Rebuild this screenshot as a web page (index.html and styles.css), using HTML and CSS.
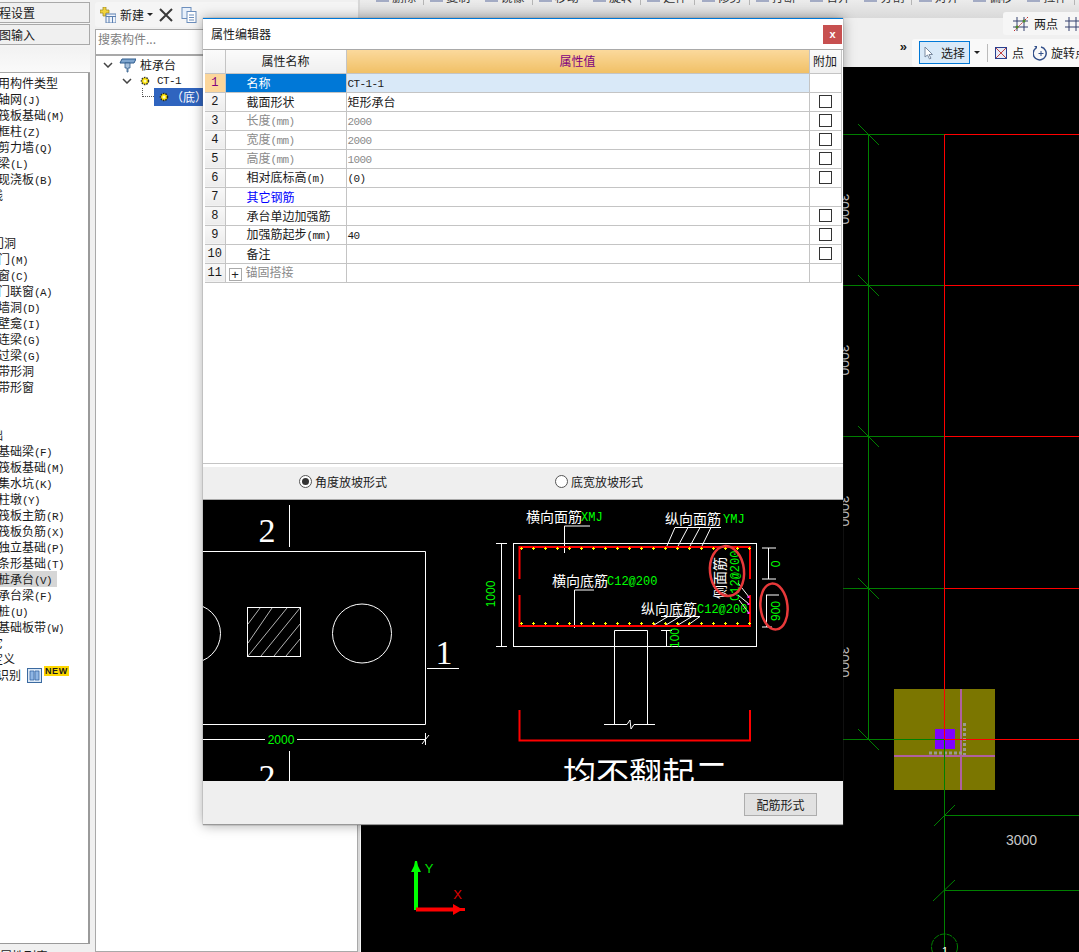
FILE: index.html
```html
<!DOCTYPE html>
<html lang="zh-CN">
<head>
<meta charset="utf-8">
<title>属性编辑器</title>
<link rel="stylesheet" href="styles.css">
</head>
<body>
<div class="app">
  <aside class="nav">
    <div class="tab">程设置</div>
    <div class="tab">图输入</div>
    <div class="nav-head"></div>
    <div class="nav-list">
      <div class="item c14">常用构件类型</div>
      <div class="item">轴网<span class="m">(J)</span></div>
      <div class="item">筏板基础<span class="m">(M)</span></div>
      <div class="item">框柱<span class="m">(Z)</span></div>
      <div class="item">剪力墙<span class="m">(Q)</span></div>
      <div class="item">梁<span class="m">(L)</span></div>
      <div class="item">现浇板<span class="m">(B)</span></div>
      <div class="item c9">线</div>
      <div class="item"></div>
      <div class="item"></div>
      <div class="item c8">门洞</div>
      <div class="item">门<span class="m">(M)</span></div>
      <div class="item">窗<span class="m">(C)</span></div>
      <div class="item">门联窗<span class="m">(A)</span></div>
      <div class="item">墙洞<span class="m">(D)</span></div>
      <div class="item">壁龛<span class="m">(I)</span></div>
      <div class="item">连梁<span class="m">(G)</span></div>
      <div class="item">过梁<span class="m">(G)</span></div>
      <div class="item">带形洞</div>
      <div class="item">带形窗</div>
      <div class="item"></div>
      <div class="item"></div>
      <div class="item c21">基础</div>
      <div class="item">基础梁<span class="m">(F)</span></div>
      <div class="item">筏板基础<span class="m">(M)</span></div>
      <div class="item">集水坑<span class="m">(K)</span></div>
      <div class="item">柱墩<span class="m">(Y)</span></div>
      <div class="item">筏板主筋<span class="m">(R)</span></div>
      <div class="item">筏板负筋<span class="m">(X)</span></div>
      <div class="item">独立基础<span class="m">(P)</span></div>
      <div class="item">条形基础<span class="m">(T)</span></div>
      <div class="item on">桩承台<span class="m">(V)</span></div>
      <div class="item">承台梁<span class="m">(F)</span></div>
      <div class="item">桩<span class="m">(U)</span></div>
      <div class="item">基础板带<span class="m">(W)</span></div>
      <div class="item c9">它</div>
      <div class="item c9">定义</div>
      <div class="item recog">
        <span>识别</span>
        <svg class="book" viewBox="0 0 15 15"><rect x=".5" y=".5" width="14" height="14" fill="#dbe8f6" stroke="#3b6aa0"/><path d="M3 3h4v9H3zM8 3h4v9H8z" fill="#8fb6e4" stroke="#2f5f9f" stroke-width=".7"/></svg>
        <span class="new">NEW</span>
      </div>
    </div>
    <div class="nav-foot">属性列表</div>
  </aside>

  <section class="tree">
    <div class="tree-tools">
      <svg class="i16" viewBox="0 0 16 16"><path d="M3 0h3v3h3v3H6v3H3V6H0V3h3z" fill="#f2d33c" stroke="#9a8420" stroke-width=".7"/><rect x="6" y="7" width="10" height="9" fill="#eef3fa" stroke="#5b7fb0"/><path d="M6 9.500h10M9 9.500V16M12.500 9.500V16" stroke="#5b7fb0" fill="none"/></svg>
      <span class="tool-label">新建</span><span class="caret"></span>
      <svg class="i14 del" viewBox="0 0 14 14"><path d="M1 1l12 12M13 1L1 13" stroke="#3a3a3a" stroke-width="2" fill="none"/></svg>
      <svg class="i16" viewBox="0 0 16 16"><rect x="1" y="0.500" width="9" height="11" fill="#e8f0fa" stroke="#6d8fbd"/><rect x="6" y="4.500" width="9" height="11" fill="#fff" stroke="#6d8fbd"/><path d="M8 8h5M8 10.500h5M8 13h5" stroke="#6d8fbd"/></svg>
    </div>
    <div class="search">搜索构件...</div>
    <div class="tree-box">
      <div class="node n1">
        <svg class="chev" viewBox="0 0 10 6"><path d="M1 1l4 4 4-4" fill="none" stroke="#444" stroke-width="1.500"/></svg>
        <svg class="funnel" viewBox="0 0 17 15"><path d="M3 1h14l-2 4H1z" fill="#7fa6cf" stroke="#2d5a8c"/><path d="M6 5h5v5H9v4H8v-4H6z" fill="#a9c2dc" stroke="#2d5a8c" stroke-width=".8"/></svg>
        <span>桩承台</span>
      </div>
      <div class="node n2">
        <svg class="chev" viewBox="0 0 10 6"><path d="M1 1l4 4 4-4" fill="none" stroke="#444" stroke-width="1.500"/></svg>
        <svg class="gear" viewBox="0 0 10 10"><circle cx="5" cy="5" r="3.500" fill="#ffe500" stroke="#333" stroke-dasharray="1.500 1" stroke-width="1.500"/><circle cx="5" cy="5" r="1.500" fill="#fff8b0"/></svg>
        <span class="m">CT-1</span>
      </div>
      <div class="node n3">
        <span class="elbow"></span>
        <div class="sel">
          <svg class="gear" viewBox="0 0 10 10"><circle cx="5" cy="5" r="3.500" fill="#ffe500" stroke="#222" stroke-dasharray="1.500 1" stroke-width="1.500"/><circle cx="5" cy="5" r="1.500" fill="#fff8b0"/></svg>
          <span class="sel-text">（底）CT-1-1</span>
        </div>
      </div>
    </div>
  </section>

  <main class="work">
    <div class="bar1">
      <span class="clip sep">删除</span><span class="clip">复制</span><span class="clip sep">镜像</span><span class="clip">移动</span><span class="clip sep">旋转</span><span class="clip sep">延伸</span><span class="clip sep">修剪</span><span class="clip">打断</span><span class="clip">合并</span><span class="clip sep">分割</span><span class="clip">对齐</span><span class="clip">偏移</span><span class="clip sep">拉伸</span>
    </div>
    <div class="bar2">
      <div class="pill">
        <svg class="i16" viewBox="0 0 16 16"><path d="M4 1v14M11 1v14M0 5h15M0 11h15" stroke="#35406f" fill="none"/><path d="M1 15L15 1" stroke="#c03030" stroke-dasharray="2 1"/><circle cx="4" cy="11" r="1.500" fill="#4c8a2c"/><circle cx="11" cy="5" r="1.500" fill="#4c8a2c"/></svg>
        <span class="bar-label">两点</span>
        <svg class="i16" viewBox="0 0 16 16"><path d="M4 1v14M11 1v14M0 5h15M0 11h15" stroke="#35406f" fill="none"/></svg>
      </div>
    </div>
    <div class="bar3">
      <div class="more">»</div>
      <div class="tools3">
        <div class="btn-sel">
          <svg class="i12" viewBox="0 0 12 14"><path d="M2 1v10l2.500-2 2 4 1.500-.8-2-3.700h3.500z" fill="#fff" stroke="#7a8aa0"/></svg>
          <span>选择</span>
        </div>
        <span class="caret"></span>
        <span class="vsep"></span>
        <svg class="i12" viewBox="0 0 12 12"><rect x=".5" y=".5" width="11" height="11" fill="#e6eaf5" stroke="#2a3f8f"/><path d="M1 1l10 10M11 1L1 11" stroke="#c04040"/></svg>
        <span class="bar-label">点</span>
        <svg class="i16" viewBox="0 0 16 16"><path d="M3 3a6.500 6.500 0 1 0 5-1" fill="none" stroke="#33508a" stroke-width="1.500"/><path d="M1 1l3 0 0 3z" fill="#33508a"/><path d="M8 6v5M5.500 8.500h5" stroke="#33508a"/></svg>
        <span class="bar-label">旋转点</span>
      </div>
    </div>
    <div class="canvas">
      <svg class="cad" viewBox="361 67 718 885">
        <g class="dg">
          <path d="M843 134.500H945M843 285.500H945M843 436.500H945M843 588.500H945M843 739.500H945"/>
          <path d="M868.500 134.500V739.500M944.500 739.500V952M944.500 815.500H1079M944.500 890.500H1079"/>
          <path d="M858 124L879 145M858 275L879 296M858 426L879 447M858 578L879 599M858 729L879 750M934 826L955 805M933 901L955 880"/>
          <circle cx="944.500" cy="947" r="13" stroke-dasharray="6 1"/>
        </g>
        <g class="rd">
          <path d="M944.500 134.500V739.500M944.500 134.500H1079M944.500 285.500H1079M944.500 436.500H1079M944.500 588.500H1079"/>
        </g>
        <rect class="olive" x="894" y="689" width="101" height="101"/>
        <rect class="pink" x="960" y="689" width="2" height="101"/>
        <rect class="pink" x="894" y="755" width="101" height="2"/>
        <path class="dots" d="M964.500 723V755M929 753H962"/>
        <rect class="violet" x="935" y="729" width="20" height="20"/>
        <g class="dg"><path d="M843 739.500H945M944.500 689V790"/></g>
        <g class="rd"><path d="M944.500 689V739.500M944.500 739.500H1079"/></g>
        <text class="t-gray" x="1021.500" y="845" text-anchor="middle">3000</text>
        <text class="t-gray" transform="translate(839 209) rotate(90)" text-anchor="middle">3000</text>
        <text class="t-gray" transform="translate(839 360) rotate(90)" text-anchor="middle">3000</text>
        <text class="t-gray" transform="translate(839 511) rotate(90)" text-anchor="middle">3000</text>
        <text class="t-gray" transform="translate(839 662) rotate(90)" text-anchor="middle">3000</text>
        <text class="t-one" x="945" y="955" text-anchor="middle">1</text>
        <path class="ax-g" d="M416 910V870"/><path class="fill-g" d="M415 861h2l1 5 3 6h-10l3-6z"/>
        <path class="ax-r" d="M416 909.500H453"/><path class="fill-r" d="M453 904l7 4h5v3h-5l-7 4z"/>
        <text class="t-axg" x="429" y="873" text-anchor="middle">Y</text>
        <text class="t-axr" x="457.500" y="899" text-anchor="middle">X</text>
      </svg>
    </div>
  </main>
</div>

<div class="dialog">
  <header class="dlg-title">
    <span>属性编辑器</span>
    <button class="close">x</button>
  </header>
  <div class="dlg-body">
    <table class="grid">
      <colgroup><col class="c-n"><col class="c-k"><col class="c-v"><col class="c-a"></colgroup>
      <thead>
        <tr><th class="num"></th><th>属性名称</th><th class="gold">属性值</th><th>附加</th></tr>
      </thead>
      <tbody>
        <tr class="active"><td class="num">1</td><td class="key">名称</td><td class="val"><span class="m">CT-1-1</span></td><td></td></tr>
        <tr><td class="num">2</td><td class="key">截面形状</td><td class="val">矩形承台</td><td class="chk"><i></i></td></tr>
        <tr class="dim"><td class="num">3</td><td class="key">长度<span class="m">(mm)</span></td><td class="val"><span class="m">2000</span></td><td class="chk"><i></i></td></tr>
        <tr class="dim"><td class="num">4</td><td class="key">宽度<span class="m">(mm)</span></td><td class="val"><span class="m">2000</span></td><td class="chk"><i></i></td></tr>
        <tr class="dim"><td class="num">5</td><td class="key">高度<span class="m">(mm)</span></td><td class="val"><span class="m">1000</span></td><td class="chk"><i></i></td></tr>
        <tr><td class="num">6</td><td class="key">相对底标高<span class="m">(m)</span></td><td class="val"><span class="m">(0)</span></td><td class="chk"><i></i></td></tr>
        <tr><td class="num">7</td><td class="key link">其它钢筋</td><td class="val"></td><td></td></tr>
        <tr><td class="num">8</td><td class="key">承台单边加强筋</td><td class="val"></td><td class="chk"><i></i></td></tr>
        <tr><td class="num">9</td><td class="key">加强筋起步<span class="m">(mm)</span></td><td class="val"><span class="m">40</span></td><td class="chk"><i></i></td></tr>
        <tr><td class="num">10</td><td class="key">备注</td><td class="val"></td><td class="chk"><i></i></td></tr>
        <tr class="dim"><td class="num">11</td><td class="key plus-cell"><b class="plus">+</b>锚固搭接</td><td class="val"></td><td></td></tr>
      </tbody>
    </table>
  </div>
  <div class="radios">
    <label class="radio"><span class="dot on"></span>角度放坡形式</label>
    <label class="radio"><span class="dot"></span>底宽放坡形式</label>
  </div>
  <div class="drawing">
    <svg class="cad" viewBox="203 500 640 281">
      <defs>
        <pattern id="plus" x="520" y="547" width="12" height="3" patternUnits="userSpaceOnUse">
          <path d="M0 1.500h3M1.500 0v3" stroke="#ffff00"/>
        </pattern>
      </defs>
      <g class="wl">
        <path d="M203 551.500H425.500V724.500H203M289.500 505V547M289.500 751V781M427 668.500H459M203 739.500H265M297 739.500H426M425.500 733V745M422 744L429 735"/>
        <circle cx="191" cy="633.500" r="29.500"/>
        <circle cx="362" cy="633.500" r="29.500"/>
        <rect x="247.500" y="607.500" width="53" height="49"/>
        <path class="thin" d="M248 624L260 608M248 643L272 608M248 656L287 608M261 656L300 608M274 656L300 624M286 656L300 639"/>
      </g>
      <text class="t-big" x="267" y="542" text-anchor="middle">2</text>
      <text class="t-big" x="444" y="664" text-anchor="middle">1</text>
      <text class="t-big" x="267" y="788" text-anchor="middle">2</text>
      <text class="t-g" x="281" y="744" text-anchor="middle">2000</text>

      <g class="wl">
        <rect x="513.500" y="543.500" width="243" height="103"/>
        <path d="M496 543.500H507M496 646.500H507M501.500 543.500V646.500"/>
        <path d="M564.500 526H590M564.500 526V553M675 527.500H721M675 527.500L666 548M688 527.500L677 548M700 527.500L689 548M711 527.500L701 548"/>
        <path d="M574.500 590H594M574.500 590V628M661 616.500H700M668 616.500L654 625M680 616.500L666 625M692 616.500L678 625M700 616.500L688 625"/>
        <path d="M738 583L749 597M738 595L749 604M739 600L749 613"/>
        <path d="M614.500 630.500H647.500M614.500 630.500V724.500M647.500 630.500V724.500M604 724.500H627L630 720L631 729L634 724.500H655"/>
        <path d="M666.500 630.500V646.500M661 630.500H672M661 646.500H672"/>
        <path d="M768.500 548V579M762 548H776M762 579H776M766.500 595V627M766 595H779M762 627H772"/>
      </g>
      <path class="rebar" d="M519.500 579V547H750V579M519.500 595V626H750V595M519.500 710V740.500H750V710"/>
      <rect x="520" y="547" width="231" height="3" fill="url(#plus)"/>
      <rect x="520" y="622" width="231" height="3" fill="url(#plus)"/>
      <path class="mdots" d="M748.500 597h.01M748.500 604h.01M748.500 613h.01"/>

      <text class="t-w" x="526" y="522">横向面筋</text><text class="t-gm" x="581" y="521">XMJ</text>
      <text class="t-w" x="665" y="524">纵向面筋</text><text class="t-gm" x="723" y="523">YMJ</text>
      <text class="t-w" x="552" y="586">横向底筋</text><text class="t-gs" x="607" y="585">C12@200</text>
      <text class="t-w" x="641" y="614">纵向底筋</text><text class="t-gs" x="697" y="613">C12@200</text>
      <text class="t-w" transform="translate(725 599) rotate(-90)">侧面筋</text>
      <text class="t-gs" transform="translate(739 601) rotate(-90)">C12@200</text>
      <text class="t-g" transform="translate(495 594) rotate(-90)" text-anchor="middle">1000</text>
      <text class="t-g" transform="translate(679 638) rotate(-90)" text-anchor="middle">100</text>
      <text class="t-g" transform="translate(780 564) rotate(-90)" text-anchor="middle">0</text>
      <text class="t-g" transform="translate(780 611) rotate(-90)" text-anchor="middle">900</text>
      <ellipse class="ring" cx="727" cy="571" rx="17" ry="25" transform="rotate(-6 727 571)"/>
      <ellipse class="ring" cx="774" cy="606.500" rx="13.500" ry="23" transform="rotate(-6 774 606.500)"/>
      <text class="t-title" x="563" y="786">均不翻起二</text>
    </svg>
  </div>
  <footer class="dlg-foot"><button class="form-btn">配筋形式</button></footer>
</div>
</body>
</html>
```
FILE: styles.css
```css
* { box-sizing: border-box; }
html, body { margin: 0; padding: 0; height: 100%; overflow: hidden; background: #fff; }
body { font: 12px/16px "Noto Sans CJK SC", "Liberation Sans", sans-serif; color: #1a1a1a; }
.m { font-family: "Liberation Mono", monospace; font-size: 11px; letter-spacing: -.6px; line-height: 12px; }
.app { display: flex; width: 1079px; height: 952px; }

.nav { width: 90px; flex: none; padding-top: 2px; background: #f4f4f4; display: flex; flex-direction: column; }
.tab { height: 21px; margin-bottom: 1px; border: 1px solid #a9a9a9; border-left: 0; background: #f0f0f0; line-height: 20px; white-space: nowrap; overflow: hidden; text-indent: -1px; }
.nav-head { height: 26px; margin-top: 1px; background: linear-gradient(#f2f2f2, #fafafa); border-bottom: 1px solid #a9a9a9; }
.nav-list { flex: 1; background: #fff; border-right: 2px solid #9a9a9a; border-bottom: 1px solid #9a9a9a; padding-top: 2px; overflow: hidden; }
.item { height: 16px; margin-left: -2px; white-space: nowrap; }
.c14 { margin-left: -14px; }
.c9 { margin-left: -9px; }
.c8 { margin-left: -8px; }
.c21 { margin-left: -21px; }
.on { background: #d6d6d6; width: 59px; }
.recog { display: flex; align-items: flex-start; margin-left: -3px; }
.book { width: 15px; height: 15px; margin: 1px 0 0 6px; flex: none; }
.new { margin: -1px 0 0 2px; height: 10px; background: #ffd800; font: bold 9px/10px "Liberation Sans", sans-serif; padding: 0 1px; letter-spacing: .6px; }
.nav-foot { height: 8px; flex: none; padding-top: 4px; background: #f0f0f0; overflow: hidden; white-space: nowrap; }

.tree { width: 268px; flex: none; padding: 2px 0 0 5px; background: #f0f0f0; display: flex; flex-direction: column; }
.tree-tools { height: 25px; display: flex; align-items: center; background: #f5f5f5; padding-left: 5px; border-radius: 3px; }
.tool-label { margin-left: 4px; }
.caret { width: 0; height: 0; border: 3px solid transparent; border-top: 3px solid #222; border-bottom: 0; margin-left: 3px; flex: none; }
.i16 { width: 16px; height: 16px; flex: none; }
.i14 { width: 14px; height: 14px; flex: none; }
.i12 { width: 12px; height: 14px; flex: none; }
.del { margin: 0 8px 0 6px; }
.search { height: 25px; margin-top: 2px; background: #fff; border: 1px solid #a9a9a9; border-bottom: 0; padding: 1px 2px; color: #808080; }
.tree-box { flex: 1; background: #fff; border: 1px solid #a9a9a9; border-top: 2px solid #a9a9a9; padding-top: 1px; }
.node { display: flex; align-items: center; height: 16px; }
.n1 { padding-left: 7px; }
.n2 { padding-left: 26px; }
.n3 { padding-left: 46px; height: 18px; margin-top: -1px; }
.chev { width: 10px; height: 6px; flex: none; }
.funnel { width: 17px; height: 15px; margin: 0 4px 0 6px; flex: none; }
.gear { width: 10px; height: 10px; flex: none; }
.n2 .gear { margin: 0 7px 0 8px; }
.elbow { width: 12px; height: 9px; margin-top: -9px; border-left: 1px dotted #555; border-bottom: 1px dotted #555; flex: none; }
.sel { display: flex; align-items: center; flex: 1; height: 18px; background: #2f64bf; color: #fff; padding-left: 5px; }
.sel-text { margin-left: 2px; white-space: nowrap; }

.work { flex: 1; display: flex; flex-direction: column; min-width: 0; background: #f0f0f0; border-left: 2px solid #d8d8d8; }
.bar1 { height: 18px; background: linear-gradient(#ececec, #d9d9d9); display: flex; overflow: hidden; padding-left: 32px; }
.clip { position: relative; margin-top: -11px; line-height: 16px; height: 16px; flex: none; margin-right: 30.250px; color: #333; }
.clip::before { content: ""; position: absolute; left: -16px; top: 0; width: 13px; height: 13px; background: #a3abc4; }
.sep::after { content: ""; position: absolute; right: -8px; top: 0; bottom: 0; width: 1px; background: #b5b5b5; }
.bar2 { height: 20px; display: flex; justify-content: flex-end; background: #f0f0f0; }
.pill { display: flex; align-items: center; height: 23px; margin-top: -6px; width: 76px; padding-left: 10px; background: #f6f6f6; border-radius: 3px 0 0 3px; overflow: hidden; flex: none; }
.pill .bar-label { margin: 0 7px 0 5px; }
.bar3 { height: 29px; display: flex; align-items: center; justify-content: flex-end; background: #f0f0f0; }
.more { margin-right: 5px; font: bold 13px/12px "Liberation Sans", sans-serif; margin-top: -11px; }
.tools3 { width: 167px; height: 28px; background: #f9f9f9; display: flex; align-items: center; padding-left: 7px; border-radius: 3px 0 0 3px; overflow: hidden; flex: none; }
.btn-sel { width: 51px; height: 23px; border: 1px solid #0078d7; background: #d9e9f8; display: flex; align-items: center; padding-left: 3px; gap: 6px; flex: none; white-space: nowrap; }
.tools3 .caret { margin-left: 4px; }
.vsep { width: 1px; height: 18px; background: #bbb; margin: 0 7px 0 7px; flex: none; }
.bar-label { white-space: nowrap; }
.tools3 .i12 + .bar-label { margin: 0 9px 0 5px; }
.tools3 .i16 + .bar-label { margin-left: 2px; }
.canvas { flex: 1; background: #000; min-height: 0; border-left: 1px solid #f5f5f5; overflow: hidden; }
.cad { display: block; width: 100%; height: 100%; }

.cad path, .cad circle, .cad ellipse { fill: none; }
.dg path, .dg circle { stroke: #008000; stroke-width: 1; }
.rd path { stroke: #ff0000; stroke-width: 1; }
.olive { fill: #7b7600; }
.pink { fill: #b060a0; }
.violet { fill: #7f00ff; }
.dots { stroke: #9a9a8a; stroke-width: 3; stroke-dasharray: 3 2; }
.ax-g { stroke: #00ff00; stroke-width: 4; }
.ax-r { stroke: #ff0000; stroke-width: 4; }
.cad .fill-g { fill: #00ff00; }
.cad .fill-r { fill: #ff0000; }
.t-gray { font: 14px "Liberation Sans", sans-serif; fill: #c8c8c8; }
.t-one { font: 11px "Liberation Sans", sans-serif; fill: #fff; }
.t-axg { font: 13px "Liberation Sans", sans-serif; fill: #00e000; }
.t-axr { font: 13px "Liberation Sans", sans-serif; fill: #e00000; }

.dialog { position: absolute; left: 203px; top: 18px; width: 640px; height: 807px; background: #fff; border-top: 1px solid #0078d7; display: flex; flex-direction: column; box-shadow: 0 0 12px rgba(0,0,0,.35), 0 0 1px #777; }
.dlg-title { height: 31px; flex: none; display: flex; align-items: center; justify-content: space-between; padding: 0 1px 1px 8px; border-bottom: 1px solid #a9a9a9; }
.close { width: 19px; height: 19px; border: 0; padding: 0; margin-top: 1px; background: #c75050; color: #fff; font: bold 11px/17px "Liberation Sans", sans-serif; }
.dlg-body { height: 413px; flex: none; padding-left: 2px; }
.grid { width: 636px; table-layout: fixed; border-collapse: collapse; }
.c-n { width: 20px; }
.c-k { width: 121px; }
.c-v { width: 463px; }
.c-a { width: 32px; }
.grid th, .grid td { height: 19px; padding: 0; border: 1px solid #c4c4c4; font-weight: 400; line-height: 14px; white-space: nowrap; overflow: hidden; }
.grid tr > :first-child { border-left: 0; }
.grid th { height: 23px; text-align: center; background: linear-gradient(#fbfbfb, #efefef); border-top: 0; }
.grid th.gold { background: linear-gradient(#fbd99c, #f0c066); color: #800080; }
.num { text-align: center; background: linear-gradient(#f8f8f8, #ececec); font-family: "Liberation Mono", monospace; font-size: 12px; }
.active .num { background: #fbd69b; color: #800080; }
.active .key { background: #0078d7; color: #fff; }
.active .val { background: #d9e9f8; }
.key { padding-left: 21px !important; }
.val { padding-left: 1px !important; }
.dim .key, .dim .val { color: #8a8a8a; }
.link { color: #0000ff; }
.chk { text-align: center; }
.chk i { display: block; width: 13px; height: 13px; margin: 0 auto; border: 1px solid #333; background: #fff; }
.plus-cell { padding-left: 3px !important; }
.plus { display: inline-block; width: 13px; height: 13px; margin-right: 4px; border: 1px solid #aaa; color: #222; font: 400 13px/11px "Liberation Sans", sans-serif; text-align: center; vertical-align: -2px; }
.radios { height: 37px; flex: none; background: #efefef; border-top: 1px solid #c4c4c4; border-bottom: 1px solid #a9a9a9; box-shadow: inset 0 3px #fff; display: flex; align-items: center; padding-left: 96px; gap: 168px; }
.radio { display: flex; align-items: center; gap: 3px; }
.dot { width: 13px; height: 13px; border: 1px solid #555; border-radius: 50%; background: #fff; position: relative; flex: none; }
.dot.on::after { content: ""; position: absolute; left: 2px; top: 2px; width: 7px; height: 7px; border-radius: 50%; background: #333; }
.drawing { height: 281px; flex: none; background: #000; overflow: hidden; }
.wl path, .wl circle { stroke: #fff; stroke-width: 1; }
.wl rect { fill: none; stroke: #fff; stroke-width: 1; }
.wl .thin { stroke-width: .7; }
.cad .rebar { stroke: #ff0000; stroke-width: 2; }
.mdots { stroke: #ff40ff; stroke-width: 2; stroke-linecap: square; }
.cad .ring { stroke: #e8393a; stroke-width: 2.500; }
.t-big { font: 34px "Liberation Serif", serif; fill: #fff; }
.t-g { font: 12px "Liberation Sans", sans-serif; fill: #00ff00; }
.t-gm { font: 12px "Liberation Mono", monospace; fill: #00ff00; }
.t-gs { font: 12px "Liberation Mono", monospace; fill: #00ff00; }
.t-w { font: 14px "Noto Sans CJK SC", sans-serif; fill: #fff; }
.t-title { font: 33px "Noto Sans CJK SC", sans-serif; fill: #fff; }
.dlg-foot { flex: 1; background: #efefef; display: flex; justify-content: flex-end; align-items: flex-start; padding: 12px 26px 0 0; border-bottom: 1px solid #999; }
.form-btn { width: 73px; height: 23px; padding: 0; background: #e1e1e1; border: 1px solid #adadad; font: 12px "Noto Sans CJK SC", sans-serif; color: #1a1a1a; }
```
